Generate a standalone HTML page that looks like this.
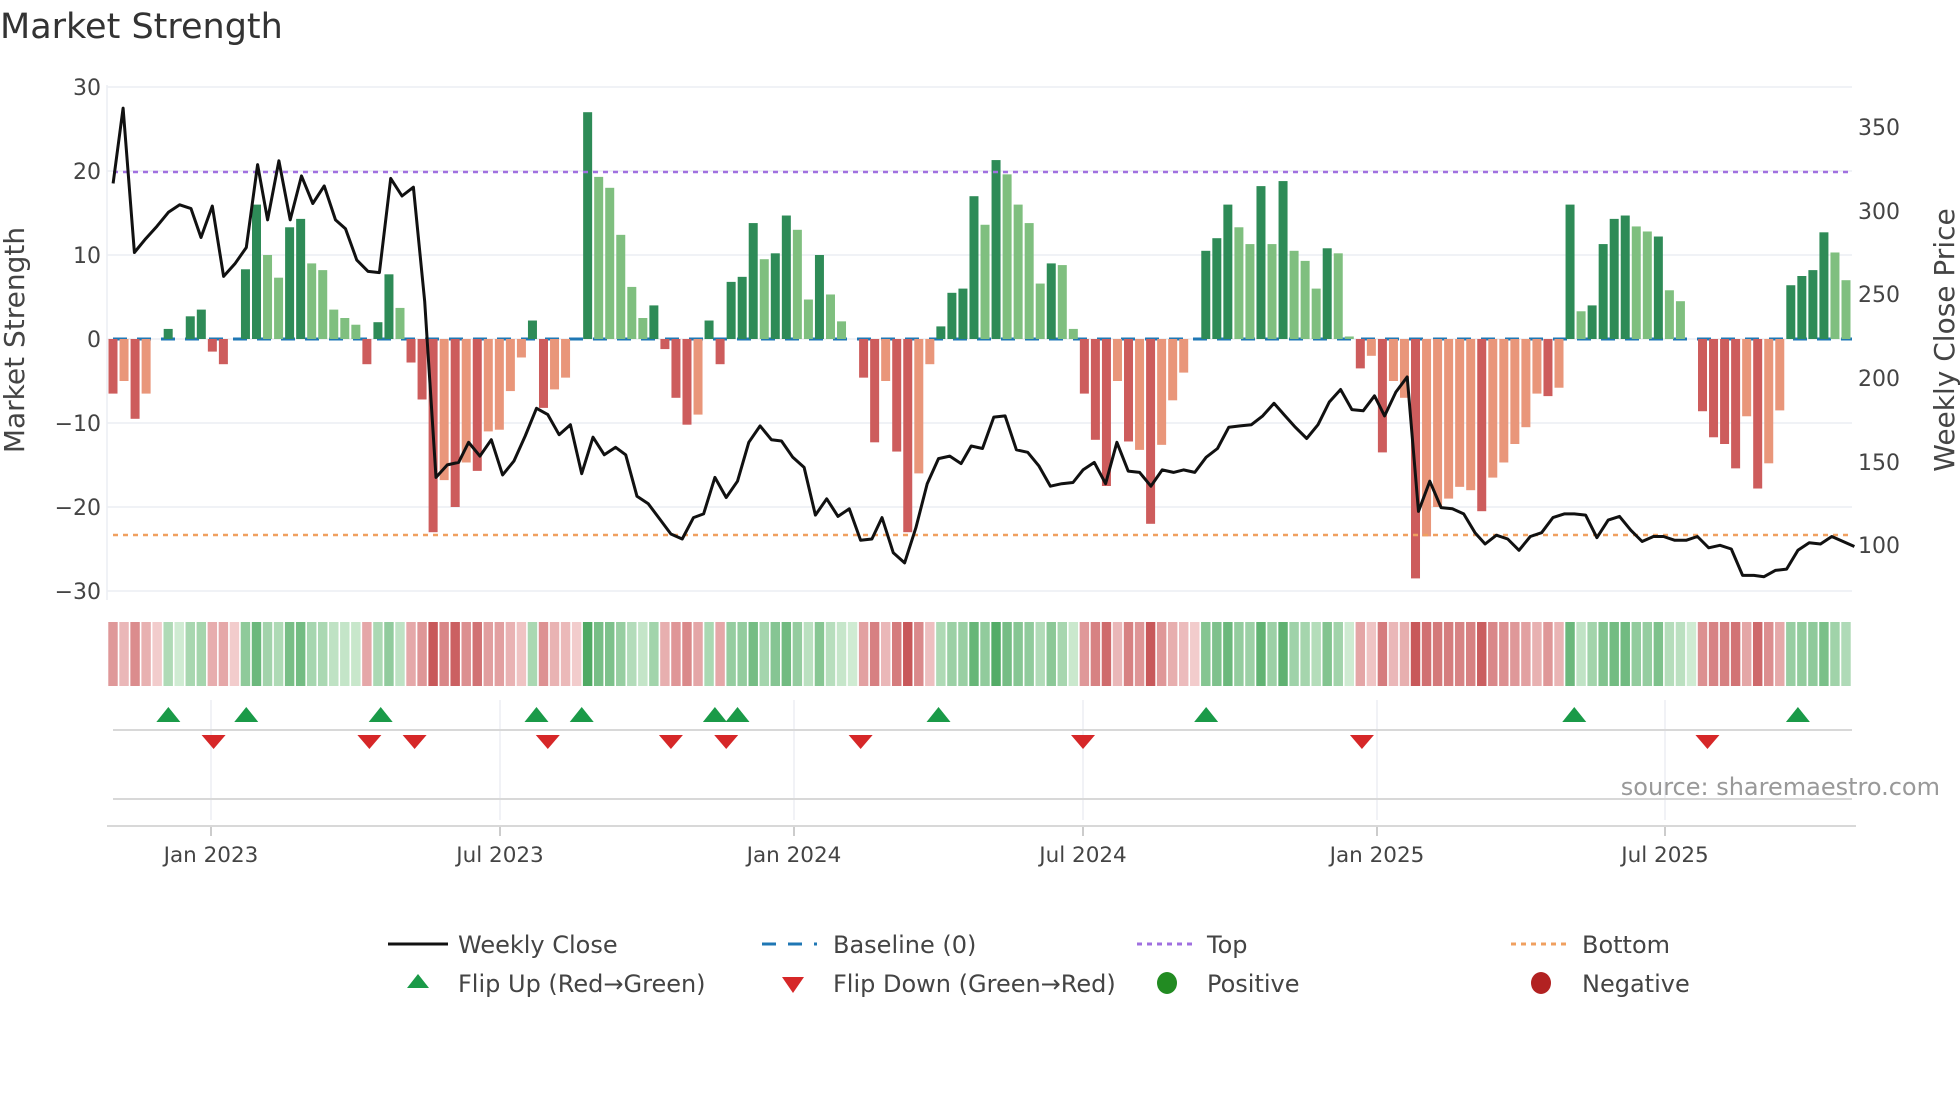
<!DOCTYPE html>
<html><head><meta charset="utf-8"><style>
html,body{margin:0;padding:0;background:#fff;}
svg{display:block;font-family:"DejaVu Sans","Liberation Sans",sans-serif;}
</style></head><body>
<svg id="s" width="1960" height="1102" viewBox="0 0 1960 1102" xmlns="http://www.w3.org/2000/svg">
<rect width="1960" height="1102" fill="#fff"/>
<text x="0" y="38" font-size="35" fill="#333">Market Strength</text>
<g id="grid"></g>
<g id="bars"></g>
<g id="heat"></g>
<g id="over"></g>
<g font-size="22" fill="#444" text-anchor="end">
<text x="101" y="95">30</text><text x="101" y="179">20</text><text x="101" y="263">10</text><text x="101" y="347">0</text>
<text x="101" y="431">−10</text><text x="101" y="515">−20</text><text x="101" y="599">−30</text>
</g>
<g font-size="22" fill="#444">
<text x="1858" y="135">350</text><text x="1858" y="219">300</text><text x="1858" y="302">250</text>
<text x="1858" y="386">200</text><text x="1858" y="470">150</text><text x="1858" y="553">100</text>
</g>
<text transform="translate(24,340) rotate(-90)" font-size="28" fill="#444" text-anchor="middle">Market Strength</text>
<text transform="translate(1954,340) rotate(-90)" font-size="28" fill="#444" text-anchor="middle">Weekly Close Price</text>
<g font-size="21.5" fill="#444" text-anchor="middle">
<text x="211" y="862">Jan 2023</text><text x="500" y="862">Jul 2023</text><text x="794" y="862">Jan 2024</text>
<text x="1083" y="862">Jul 2024</text><text x="1377" y="862">Jan 2025</text><text x="1665" y="862">Jul 2025</text>
</g>
<text x="1940" y="795" font-size="24" fill="#999" text-anchor="end">source: sharemaestro.com</text>
<g font-size="24" fill="#444">
<line x1="388" y1="944" x2="448" y2="944" stroke="#111" stroke-width="3"/>
<text x="458" y="953">Weekly Close</text>
<line x1="762" y1="944" x2="817" y2="944" stroke="#1f77b4" stroke-width="3" stroke-dasharray="14,12"/>
<text x="833" y="953">Baseline (0)</text>
<line x1="1137" y1="944" x2="1192" y2="944" stroke="#a070e0" stroke-width="3" stroke-dasharray="5,5"/>
<text x="1207" y="953">Top</text>
<line x1="1511" y1="944" x2="1567" y2="944" stroke="#f0a060" stroke-width="3" stroke-dasharray="5,5"/>
<text x="1582" y="953">Bottom</text>
<polygon points="418,974 429,988 407,988" fill="#1a9a48"/>
<text x="458" y="992">Flip Up (Red→Green)</text>
<polygon points="782,977 804,977 793,993" fill="#d62728"/>
<text x="833" y="992">Flip Down (Green→Red)</text>
<ellipse cx="1167" cy="983" rx="10" ry="11" fill="#228b22"/>
<text x="1207" y="992">Positive</text>
<ellipse cx="1541" cy="983" rx="10" ry="11" fill="#b22222"/>
<text x="1582" y="992">Negative</text>
</g>
</svg>
<script>
var NS="http://www.w3.org/2000/svg",K=1.2564;
function el(p,t,a){var e=document.createElementNS(NS,t);for(var k in a)e.setAttribute(k,a[k]);document.getElementById(p).appendChild(e);return e;}
var Z=339,U=8.4;
for(var v=-30;v<=30;v+=10){el("grid","line",{x1:107,x2:1852,y1:Z-v*U,y2:Z-v*U,stroke:"#eceef3","stroke-width":1.5});}
el("grid","line",{x1:107,x2:107,y1:85,y2:600,stroke:"#eceef3","stroke-width":1.5});
var ticks=[211,500,794,1083,1377,1665];
ticks.forEach(function(x){el("grid","line",{x1:x,x2:x,y1:700,y2:820,stroke:"#eceef3","stroke-width":1.5});el("grid","line",{x1:x,x2:x,y1:826,y2:836,stroke:"#bbb","stroke-width":1.5});});
el("grid","line",{x1:113,x2:1852,y1:730,y2:730,stroke:"#d8d8d8","stroke-width":2});
el("grid","line",{x1:113,x2:1852,y1:799,y2:799,stroke:"#d8d8d8","stroke-width":2});
el("grid","line",{x1:107,x2:1856,y1:826,y2:826,stroke:"#d8d8d8","stroke-width":2});
var d="-6.5d -5l -9.5d -6.5l 0 1.2d 0 2.7d 3.5d -1.5d -3d 0 8.3d 16d 10l 7.3l 13.3d 14.3d 9l 8.2l 3.5l 2.5l 1.7l -3d 2d 7.7d 3.7l -2.8d -7.2d -23d -16.8l -20d -14.7l -15.7d -11l -10.8l -6.2l -2.2l 2.2d -8.2d -6l -4.6l 0 27d 19.3l 18l 12.4l 6.2l 2.5l 4d -1.2d -7d -10.2d -9l 2.2d -3d 6.8d 7.4d 13.8d 9.5l 10.2d 14.7d 13l 4.7l 10d 5.3l 2.1l 0 -4.6d -12.3d -5l -13.4d -23d -16l -3l 1.5d 5.5d 6d 17d 13.6l 21.3d 19.6l 16l 13.8l 6.6l 9d 8.8l 1.2l -6.5d -12d -17.5d -5l -12.2d -13.2l -22d -12.6l -7.3l -4l 0 10.5d 12d 16d 13.3l 11.3l 18.2d 11.3l 18.8d 10.5l 9.3l 6l 10.8d 10.2l 0.3l -3.5d -2l -13.5d -5l -7l -28.5d -23.5l -20l -19l -17.6l -18l -20.5d -16.5l -14.7l -12.5l -10.5l -6.5l -6.8d -5.8l 16d 3.3l 4d 11.3d 14.3d 14.7d 13.4l 12.8l 12.2d 5.8l 4.5l 0 -8.6d -11.7d -12.5d -15.4d -9.2l -17.8d -14.8l -8.5l 6.4d 7.5d 8.2d 12.7d 10.3l 7l".split(" ");
var n=d.length,x0=113,x1=1846,dx=(x1-x0)/(n-1);
el("bars","line",{x1:113,x2:1852,y1:Z,y2:Z,stroke:"#1f77b4","stroke-width":3,"stroke-dasharray":"14,10"});
var prev=-1;
function mix(a,b,t){return "rgb("+[0,1,2].map(function(i){return Math.round(a[i]+(b[i]-a[i])*t)}).join(",")+")";}
for(var i=0;i<n;i++){
 var v=parseFloat(d[i]),dk=d[i].slice(-1)=="d",x=x0+i*dx;
 if(v!=0){var c=v>0?(dk?"#2e8b57":"#7fbf7f"):(dk?"#cd5c5c":"#e9967a");
  var y=Z-v*U;el("bars","rect",{x:x-4.5,width:9,y:Math.min(y,Z),height:Math.abs(v*U),fill:c});prev=v>0?1:-1;}
 var t=Math.min(1,Math.abs(v)/22)*0.75+(dk?0.25:0.05);
 var col=prev>0?mix([214,238,216],[80,170,100],t):mix([244,210,210],[200,88,90],t);
 el("heat","rect",{x:x-dx/2+0.8,width:dx-1.6,y:622,height:64,fill:col});
}
el("over","line",{x1:113,x2:1852,y1:172,y2:172,stroke:"#a070e0","stroke-width":2.5,"stroke-dasharray":"5,5"});
el("over","line",{x1:113,x2:1852,y1:535,y2:535,stroke:"#f0a060","stroke-width":2.5,"stroke-dasharray":"5,5"});
var P=[[90,146],[98,86],[107,201],[116,190],[125,180],[134,169],[143,163],[152,166],[160,189],[169,164],[178,220],[187,210],[196,197],[205,131],[213,175],[222,128],[231,175],[240,140],[249,162],[258,148],[267,175],[275,182],[284,207],[293,216],[302,217],[311,142],[320,156],[329,149],[338,240],[347,380],[356,370],[365,368],[373,352],[382,363],[391,350],[400,378],[409,367],[418,347],[427,325],[436,330],[445,346],[454,338],[463,377],[472,348],[481,362],[490,356],[498,362],[507,395],[516,401],[525,413],[534,425],[543,429],[552,412],[560,409],[569,380],[578,396],[587,383],[596,352],[605,339],[614,350],[622,351],[631,364],[640,372],[649,410],[658,397],[667,411],[676,405],[685,430],[694,429],[702,412],[711,440],[720,448],[729,420],[738,385],[747,365],[756,363],[765,369],[773,355],[782,357],[791,332],[800,331],[809,358],[818,360],[827,371],[836,387],[845,385],[854,384],[862,374],[871,368],[880,385],[889,352],[898,375],[907,376],[916,387],[925,374],[934,376],[942,374],[951,376],[960,364],[969,357],[978,340],[987,339],[996,338],[1005,331],[1014,321],[1022,330],[1031,340],[1040,349],[1049,338],[1058,320],[1067,310],[1076,326],[1085,327],[1094,315],[1102,331],[1111,312],[1120,300],[1129,407],[1138,383],[1147,404],[1156,405],[1165,409],[1174,424],[1182,433],[1191,426],[1200,429],[1209,438],[1218,427],[1227,424],[1236,412],[1245,409],[1253,409],[1262,410],[1271,428],[1280,414],[1289,411],[1298,422],[1307,431],[1316,427],[1324,427],[1333,430],[1342,430],[1351,427],[1360,436],[1369,434],[1378,437],[1387,458],[1396,458],[1404,459],[1413,454],[1422,453],[1431,438],[1440,432],[1449,433],[1458,427],[1467,431],[1476,435]];
el("over","polyline",{points:P.map(function(p){return (p[0]*K).toFixed(1)+","+(p[1]*K).toFixed(1)}).join(" "),fill:"none",stroke:"#111","stroke-width":3,"stroke-linejoin":"round"});
[134,196,303,427,463,569,587,747,960,1253,1431].forEach(function(x){x*=K;el("over","polygon",{points:(x)+",707 "+(x+12)+",722 "+(x-12)+",722",fill:"#1a9a48"});});
[170,294,330,436,534,578,685,862,1084,1359].forEach(function(x){x*=K;el("over","polygon",{points:(x-12)+",735 "+(x+12)+",735 "+x+",749",fill:"#d62728"});});
</script>
</body></html>
